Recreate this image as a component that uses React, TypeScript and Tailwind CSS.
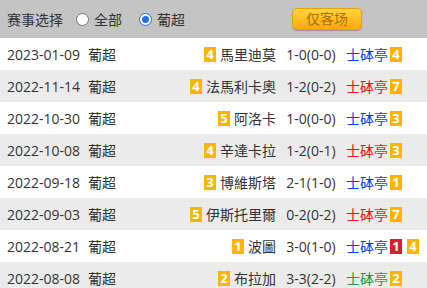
import React from 'react';

type Side = 'blue' | 'red' | 'green';

interface Match {
    date: string;
    home: string;
    homeRank: string;
    score: string;
    awayColor: Side;
    awayRank: string;
    card?: string;
}

const MATCHES: Match[] = [
    { date: '2023-01-09', home: '馬里迪莫', homeRank: '4', score: '1-0(0-0)', awayColor: 'blue', awayRank: '4' },
    { date: '2022-11-14', home: '法馬利卡奧', homeRank: '4', score: '1-2(0-2)', awayColor: 'red', awayRank: '7' },
    { date: '2022-10-30', home: '阿洛卡', homeRank: '5', score: '1-0(0-0)', awayColor: 'blue', awayRank: '3' },
    { date: '2022-10-08', home: '辛達卡拉', homeRank: '4', score: '1-2(0-1)', awayColor: 'red', awayRank: '3' },
    { date: '2022-09-18', home: '博維斯塔', homeRank: '3', score: '2-1(1-0)', awayColor: 'blue', awayRank: '1' },
    { date: '2022-09-03', home: '伊斯托里爾', homeRank: '5', score: '0-2(0-2)', awayColor: 'red', awayRank: '7' },
    { date: '2022-08-21', home: '波圖', homeRank: '1', score: '3-0(1-0)', awayColor: 'blue', awayRank: '4', card: '1' },
    { date: '2022-08-08', home: '布拉加', homeRank: '2', score: '3-3(2-2)', awayColor: 'green', awayRank: '2' },
];

const SIDE_CLASS: Record<Side, string> = {
    blue: 'text-[#0b3cf5]',
    red: 'text-[#f01010]',
    green: 'text-[#1b9a3e]',
};

function Rank({ n, red }: { n: string; red?: boolean }) {
    return (
        <span
            className={`inline-flex items-center justify-center w-[12px] h-[15px] text-[13px] leading-none font-bold text-white ${
                red ? 'bg-[#d8202c]' : 'bg-[#ffb400]'
            }`}
        >
            {n}
        </span>
    );
}

function Radio({ checked, label }: { checked?: boolean; label: string }) {
    return (
        <label className="flex items-center gap-[5px]">
            <span
                className={`w-[13px] h-[13px] rounded-full bg-white flex items-center justify-center border ${
                    checked ? 'border-[#1a73e8]' : 'border-[#767676]'
                }`}
            >
                {checked && <span className="w-[7px] h-[7px] rounded-full bg-[#1a73e8]" />}
            </span>
            <span>{label}</span>
        </label>
    );
}

export default function App() {
    return (
        <div
            className="w-[427px] h-[288px] overflow-hidden bg-white text-[14px] text-[#333]"
            style={{ fontFamily: '"Open Sans", "Noto Sans CJK SC", sans-serif' }}
        >
            {/* filter bar */}
            <div className="h-[38px] bg-[#c4c4c4] flex items-center pl-[7px]">
                <span>赛事选择</span>
                <div className="ml-[13px] flex items-center gap-[17px]">
                    <Radio label="全部" />
                    <Radio checked label="葡超" />
                </div>
                <button className="ml-[107px] w-[70px] h-[22px] rounded-[5px] border border-[#eda300] bg-gradient-to-b from-[#ffd43c] to-[#ffa900] text-[#a8700c] text-[14px] leading-none shadow-[0_1px_1px_rgba(0,0,0,0.25)]">
                    仅客场
                </button>
            </div>

            {/* match list */}
            <div>
                {MATCHES.map((m, i) => (
                    <div
                        key={m.date}
                        className={`h-[32px] flex items-center pl-[7px] ${i % 2 === 1 ? 'bg-[#ebebeb]' : 'bg-white'}`}
                    >
                        <span className="w-[81px]">{m.date}</span>
                        <span className="w-[32px]">葡超</span>
                        <div className="flex-1 flex items-center justify-end gap-[4px]">
                            <Rank n={m.homeRank} />
                            <span>{m.home}</span>
                        </div>
                        <span className="w-[70px] text-center">{m.score}</span>
                        <div className="w-[81px] flex items-center gap-[2px]">
                            <span className={SIDE_CLASS[m.awayColor]}>士砵亭</span>
                            {m.card && <Rank n={m.card} red />}
                            {m.card && <span className="w-[1px]" />}
                            <Rank n={m.awayRank} />
                        </div>
                    </div>
                ))}
            </div>
        </div>
    );
}
